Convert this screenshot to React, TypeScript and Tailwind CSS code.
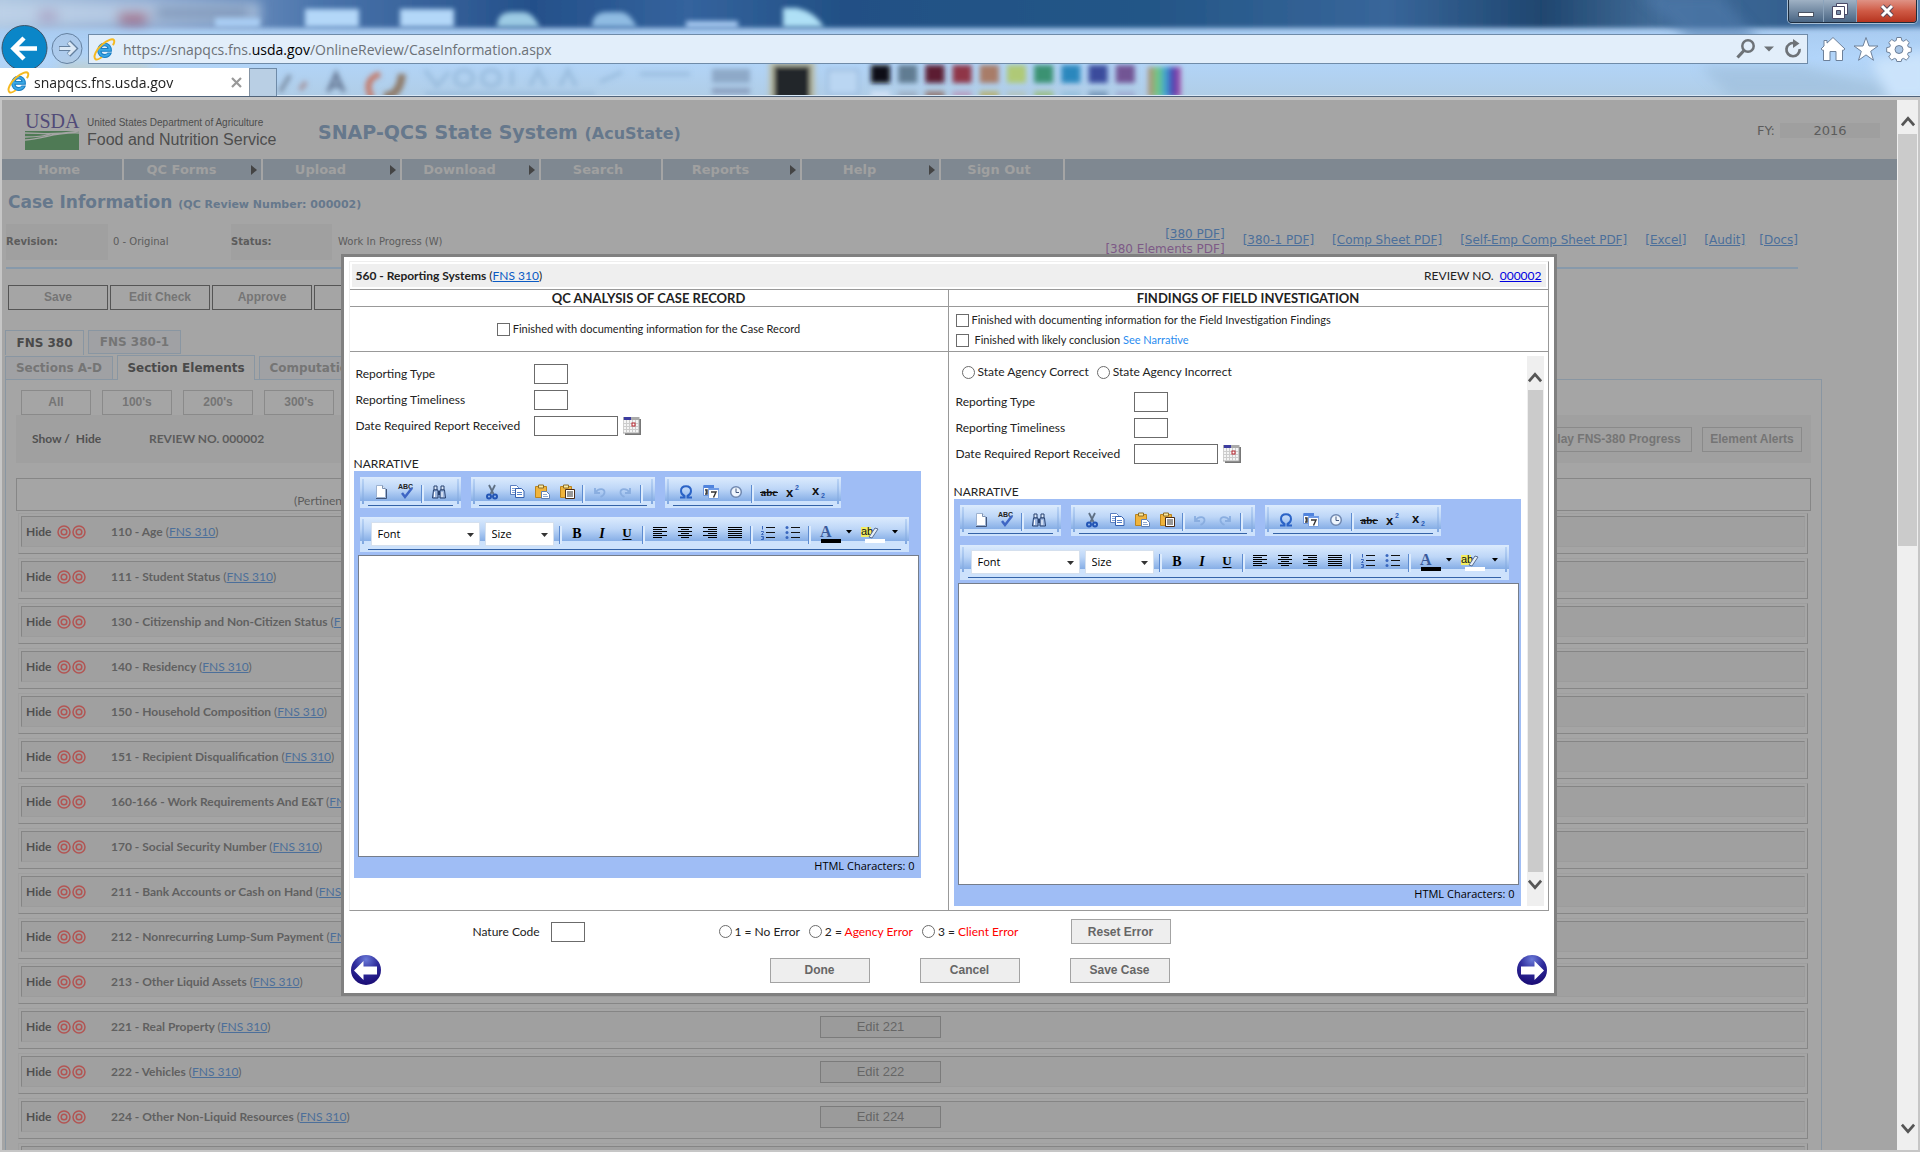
import React from "react";

const GILL = "font-['Lato','Liberation_Sans',sans-serif]";
const VERDANA = "font-['DejaVu_Sans','Liberation_Sans',sans-serif]";
const ARIAL = "font-['Liberation_Sans',Arial,sans-serif]";
const SEGOE = "font-['Open_Sans','Noto_Sans',sans-serif]";

/* ---------- browser chrome ---------- */

function IeLogo({ className }: { className: string }) {
  return (
    <svg viewBox="0 0 22 22" className={className} aria-hidden="true">
      <path d="M17.6 12.6H7.6c.2 2 1.6 3.3 3.6 3.3 1.400 0 2.400-.6 3-1.500h3.200c-1 2.700-3.300 4.200-6.200 4.200-3.900 0-6.700-2.900-6.700-6.800 0-3.900 2.800-6.800 6.600-6.800 4 0 6.700 3 6.500 7.600zM7.700 10.100h6.700c-.3-1.700-1.500-2.700-3.300-2.700-1.700 0-3 1-3.400 2.700z" fill="#3aa8e6" stroke="#1b7fc4" strokeWidth="1" />
      <path d="M2.500 20.300C-.5 18 3.500 10.500 9 6c4.800-4 9.700-6 11-4 .7 1.100.2 2.700-.6 4.200" fill="none" stroke="#f5b921" strokeWidth="1.900" strokeLinecap="round" />
      <path d="M2.500 20.300c1.200.8 3.300 0 5.300-1.500" fill="none" stroke="#f5b921" strokeWidth="1.700" strokeLinecap="round" />
    </svg>
  );
}

const SWATCHES = [
  ["#0c1116", "#cfe0f4"], ["#617b92", "#9fb2c8"], ["#5c1a30", "#95817f"], ["#8f3446", "#b6a3c4"],
  ["#a87c68", "#b5b37f"], ["#afc977", "#b3c6c4"], ["#3a9272", "#9cc08f"], ["#2a87bd", "#9ac1dd"],
  ["#3a4c9c", "#7d9dbd"], ["#725494", "#a0b0d4"],
];

function GlassBackdrop() {
  return (
    <svg className="absolute inset-0 h-full w-full" viewBox="0 0 1920 97" preserveAspectRatio="none" aria-hidden="true">
      <defs>
        <linearGradient id="top" x1="0" x2="1" y1="0" y2="0">
          <stop offset="0" stopColor="#b0c8e2" />
          <stop offset="0.080" stopColor="#8aa6cf" />
          <stop offset="0.170" stopColor="#4a74ab" />
          <stop offset="0.280" stopColor="#24508a" />
          <stop offset="0.360" stopColor="#34639d" />
          <stop offset="0.440" stopColor="#225085" />
          <stop offset="0.600" stopColor="#245687" />
          <stop offset="0.720" stopColor="#38669a" />
          <stop offset="0.800" stopColor="#1f466f" />
          <stop offset="0.860" stopColor="#426c98" />
          <stop offset="0.930" stopColor="#34608f" />
          <stop offset="1" stopColor="#5685b5" />
        </linearGradient>
        <linearGradient id="low" x1="0" x2="0" y1="0" y2="1">
          <stop offset="0" stopColor="#9fc1e6" />
          <stop offset="0.600" stopColor="#b2d5fa" />
          <stop offset="1" stopColor="#b0cde6" />
        </linearGradient>
        <linearGradient id="rainbow" x1="0" x2="1" y1="0" y2="0">
          <stop offset="0" stopColor="#b98a76" />
          <stop offset="0.300" stopColor="#6ccb84" />
          <stop offset="0.550" stopColor="#3d9ed6" />
          <stop offset="0.750" stopColor="#4a3fb0" />
          <stop offset="1" stopColor="#b057a8" />
        </linearGradient>
        <filter id="soft" x="-20%" y="-20%" width="140%" height="140%"><feGaussianBlur stdDeviation="2.500" /></filter>
        <filter id="haze" x="-20%" y="-60%" width="140%" height="220%"><feGaussianBlur stdDeviation="6" /></filter>
      </defs>
      <rect width="1920" height="97" fill="url(#low)" />
      <g filter="url(#soft)"><rect x="-10" y="-20" width="1940" height="48" fill="url(#top)" /></g>
      <g filter="url(#haze)">
        <rect x="-10" y="2" width="270" height="22" fill="#c3d5ea" opacity="0.700" />
        <rect x="38" y="10" width="20" height="12" fill="#a48fb8" opacity="0.600" />
        <rect x="118" y="12" width="30" height="12" fill="#a04c68" opacity="0.700" />
        <rect x="155" y="8" width="95" height="10" fill="#57739c" opacity="0.700" />
        <path d="M1640 -5L1720 -5L1760 40L1690 40Z" fill="#4f7cab" opacity="0.600" />
        <path d="M1700 66L1800 66L1920 97L1730 97Z" fill="#9cbcd9" opacity="0.600" />
        <path d="M1870 60L1930 50L1930 100L1890 100Z" fill="#cbe3fb" />
        <rect x="60" y="62" width="90" height="40" fill="#c6cdbb" opacity="0.600" />
      </g>
      <g filter="url(#soft)">
        <rect x="305" y="9" width="54" height="18" fill="#b3d7f8" />
        <rect x="400" y="9" width="54" height="18" fill="#b3d7f8" />
        <path d="M497 27q0-15 15-15h12q8 0 16 15z" fill="#9ccbe4" />
        <path d="M592 27q0-15 15-15h14q8 0 16 15z" fill="#8fbbe2" />
        <rect x="215" y="18" width="45" height="9" fill="#a9cdf3" />
        <rect x="686" y="21" width="52" height="7" fill="#a5c8f0" />
        <path d="M783 27V8h14q18 4 27 19z" fill="#afe0f6" />
        <path d="M280 92l10-17" stroke="#7c8ea5" strokeWidth="4" />
        <path d="M300 90l6-8" stroke="#a59aa6" strokeWidth="5" />
        <path d="M328 92l8-18 8 18M331 86h10" stroke="#6c7f9b" strokeWidth="4" fill="none" />
        <path d="M380 74q-18 6-8 24" stroke="#c47a6b" strokeWidth="6" fill="none" />
        <path d="M384 96q16 0 18-22" stroke="#8f7c6b" strokeWidth="8" fill="none" />
        <path opacity="0.600" d="M425 70l12 16 12-14M455 78a9 8 0 1 0 18 0a9 8 0 1 0-18 0M482 78a9 8 0 1 0 18 0a9 8 0 1 0-18 0M512 70v16M530 86l8-16 8 16M560 86l8-16 8 16M600 82l22-10M425 94h170M640 74h50" stroke="#8cb0d4" strokeWidth="4" fill="none" />
        <rect x="712" y="69" width="38" height="14" fill="#8ea9c8" />
        <rect x="712" y="88" width="38" height="6" fill="#8a9fbe" />
        <rect x="769" y="62" width="46" height="40" fill="#b9bda9" />
        <rect x="774" y="66" width="36" height="34" fill="#24272b" />
        <rect x="828" y="70" width="30" height="24" fill="#bad6f2" stroke="#98b8dc" strokeWidth="2" />
        {SWATCHES.map(([a, b], i) => (
          <g key={a}>
            <rect x={871 + i * 27.200} y="65" width="19" height="18" fill={a} />
            <rect x={871 + i * 27.200} y="91" width="19" height="9" fill={b} />
          </g>
        ))}
        <rect x="1148" y="67" width="33" height="30" fill="url(#rainbow)" />
      </g>
      <rect y="95" width="1920" height="1" fill="#d9e9f8" />
      <rect y="96" width="1920" height="1" fill="#50637a" />
    </svg>
  );
}

function BrowserChrome() {
  return (
    <header className={`relative h-[97px] shrink-0 overflow-hidden ${SEGOE}`}>
      <GlassBackdrop />
      <div className="absolute top-0 right-[3px] flex h-[23px] w-[129px] overflow-hidden rounded-b-[4px] border border-t-0 border-[#1d2c3d] shadow-[0_0_0_1px_#a5bdd4]">
        <button aria-label="Minimize" className="grid w-[35px] place-items-center border-r border-[#8ba3bb] bg-linear-to-b from-[#9fb1c4] to-[#4a6684]">
          <svg width="18" height="14" viewBox="0 0 18 14"><rect x="1.500" y="8.500" width="15" height="4" fill="#fff" stroke="#4a5363" /></svg>
        </button>
        <button aria-label="Restore" className="grid w-[33px] place-items-center border-r border-[#8ba3bb] bg-linear-to-b from-[#9fb1c4] to-[#4a6684]">
          <svg width="20" height="18" viewBox="0 0 20 18">
            <path d="M6.500 1.500h11v11h-11z" fill="#fff" stroke="#4a4a66" />
            <path d="M2.500 4.500h12v12h-12z" fill="#fff" stroke="#4a4a66" />
            <path d="M6.500 8.500h4v4h-4z" fill="#7a8fa8" stroke="#4a4a66" />
          </svg>
        </button>
        <button aria-label="Close" className="grid flex-1 place-items-center bg-linear-to-b from-[#df9285] via-[#cf5a45] to-[#b6331e]">
          <svg width="20" height="16" viewBox="0 0 20 16">
            <path d="M5 3l10 10M15 3L5 13" stroke="#5b4a5a" strokeWidth="5" />
            <path d="M5 3l10 10M15 3L5 13" stroke="#fff" strokeWidth="3" />
          </svg>
        </button>
      </div>
      <div className="relative flex h-[68px] items-start pt-[34px]">
        <div className="relative h-[30px] w-[88px] shrink-0">
          <svg className="absolute -top-[10px] left-0" width="88" height="44" viewBox="0 0 88 44" role="img" aria-label="Back and forward">
            <circle cx="24.500" cy="24" r="22.500" fill="#0a86c8" stroke="#3c5468" />
            <path d="M37 24.500H15M24 14L13.500 24.500 24 35" fill="none" stroke="#fff" strokeWidth="4.500" />
            <circle cx="67" cy="24.500" r="15" fill="#a9c4e2" fillOpacity="0.500" stroke="#64809f" />
            <path d="M59 24.500h15M68.500 18l6.500 6.500-6.500 6.500" fill="none" stroke="#64809f" strokeWidth="5" />
            <path d="M59.500 24.500h14M68.500 18.500l6 6-6 6" fill="none" stroke="#dbe8f5" strokeWidth="3" />
          </svg>
        </div>
        <div className="flex h-[30px] flex-1 items-center border border-[#6f8ba8] bg-[#e2eefa] pl-[4px]">
          <IeLogo className="h-[23px] w-[23px]" />
          <span className="ml-[7px] flex-1 pt-[2px] text-[14px] leading-5 text-[#6c7177]">
            https://snapqcs.fns.<b className="font-normal text-black">usda.gov</b>/OnlineReview/CaseInformation.aspx
          </span>
          <button aria-label="Search">
            <svg width="20" height="20" viewBox="0 0 20 20" fill="none" stroke="#6d7277"><circle cx="12" cy="7" r="5.700" strokeWidth="2.500" /><path d="M8 11.500L1.500 18.500" strokeWidth="3.200" /></svg>
          </button>
          <button aria-label="Search options" className="mx-[8px]">
            <svg width="10" height="6" viewBox="0 0 10 6"><path d="M0 .5h10L5 5.500z" fill="#6d7277" /></svg>
          </button>
          <button aria-label="Refresh" className="mr-[5px] ml-[2px]">
            <svg width="18" height="20" viewBox="0 0 18 20"><path d="M10.500 4.200A6.600 6.600 0 1 0 15.600 10" fill="none" stroke="#6d7277" strokeWidth="2.700" /><path d="M9 0l6.500 4.500L9 9z" fill="#6d7277" /></svg>
          </button>
        </div>
        <div className="flex h-[30px] items-center gap-[7px] pr-[8px] pl-[12px]">
          <button aria-label="Home">
            <svg width="26" height="26" viewBox="0 0 26 26"><path d="M13 1.500L25 13l-2 1.500-.5-.3V24.500h-6.500v-9h-6v9H3.500V14.200l-.5.3L1 13l3-3V4.500h3v2.600z" fill="#fff" stroke="#6d8099" /></svg>
          </button>
          <button aria-label="Favorites">
            <svg width="26" height="26" viewBox="0 0 26 26"><path d="M13 1.500l3 8.500h9l-7.300 5.300 2.800 9L13 18.900l-7.500 5.400 2.800-9L1 10h9z" fill="#fff" stroke="#6d8099" /></svg>
          </button>
          <button aria-label="Tools">
            <svg width="26" height="26" viewBox="0 0 26 26">
              <path d="M10.800 1.500h4.400l.6 3 1.800.8 2.600-1.800 3.100 3.100-1.700 2.600.7 1.800 3 .6v4.400l-3 .6-.8 1.800 1.800 2.600-3.100 3.100-2.600-1.700-1.800.7-.6 2.400h-4.400l-.6-2.400-1.800-.7-2.600 1.700L2.700 21l1.800-2.600-.8-1.800-3-.6v-4.400l3-.6.7-1.800-1.700-2.600 3.100-3.100 2.600 1.800 1.800-.8z" fill="#fff" stroke="#6d8099" />
              <circle cx="13" cy="13.500" r="4" fill="#a9c6e6" stroke="#6d8099" />
            </svg>
          </button>
        </div>
      </div>
      <div className="relative flex h-[28px]">
        <div className="flex w-[250px] items-center border-r border-[#8493a3] bg-white pl-[7px]">
          <IeLogo className="h-[23px] w-[23px]" />
          <span className="ml-[4px] flex-1 pt-px text-[14px] leading-5 text-[#222]">snapqcs.fns.usda.gov</span>
          <button aria-label="Close tab" className="mr-[7px]">
            <svg width="11" height="11" viewBox="0 0 11 11"><path d="M1 1l9 9M10 1l-9 9" stroke="#999" strokeWidth="2.200" /></svg>
          </button>
        </div>
        <button aria-label="New tab" className="w-[27px] border-t border-r border-[#6f8ba8] bg-[#b9cfe4]" />
      </div>
    </header>
  );
}

/* ---------- page behind the dialog ---------- */

function UsdaLogo() {
  return (
    <div className={`flex gap-[7px] ${ARIAL}`}>
      <div className="flex w-[55px] flex-col">
        <span className="font-['Liberation_Serif',serif] text-[20px] leading-[19px] text-[#514b78]">USDA</span>
        <svg width="54" height="19" viewBox="0 0 54 19" aria-hidden="true">
          <rect width="54" height="19" fill="#4f7a55" />
          <path d="M0 2c18 0 26 3 54-2M0 9c20-1 28-8 54-7M0 6c14 0 20-1 26-3" stroke="#a5a5a5" strokeWidth="1.300" fill="none" />
        </svg>
      </div>
      <div className="flex flex-col text-[#4d4d4d]">
        <span className="pt-[4px] text-[10px] leading-[14px]">United States Department of Agriculture</span>
        <span className="text-[16px] leading-[19px]">Food and Nutrition Service</span>
      </div>
    </div>
  );
}

const NAV: [string, boolean, string][] = [
  ["Home", false, "w-[122px]"], ["QC Forms", true, "w-[139px]"], ["Upload", true, "w-[139px]"],
  ["Download", true, "w-[139px]"], ["Search", false, "w-[122px]"], ["Reports", true, "w-[139px]"],
  ["Help", true, "w-[139px]"], ["Sign Out", false, "w-[124px]"],
];

const LINK = "text-[#4c6f9a] underline";

function FnsLink() {
  return (
    <span className="font-normal">
      (<a href="#fns310" className={LINK}>FNS 310</a>)
    </span>
  );
}

function PageButton({ children, className = "" }: { children: React.ReactNode; className?: string }) {
  return (
    <button className={`h-[25px] border pb-px text-center text-[12px] leading-4 font-bold text-[#757575] ${ARIAL} ${className}`}>{children}</button>
  );
}

function Target() {
  return (
    <svg width="14" height="14" viewBox="0 0 14 14" fill="none" stroke="#b25553" aria-hidden="true">
      <circle cx="7" cy="7" r="6" strokeWidth="1.500" />
      <circle cx="7" cy="7" r="2.800" strokeWidth="1.500" />
    </svg>
  );
}

const ELEMENTS: [string, string?][] = [
  ["110 - Age"], ["111 - Student Status"], ["130 - Citizenship and Non-Citizen Status"], ["140 - Residency"],
  ["150 - Household Composition"], ["151 - Recipient Disqualification"], ["160-166 - Work Requirements And E&T"],
  ["170 - Social Security Number"], ["211 - Bank Accounts or Cash on Hand"], ["212 - Nonrecurring Lump-Sum Payment"],
  ["213 - Other Liquid Assets"], ["221 - Real Property", "Edit 221"], ["222 - Vehicles", "Edit 222"],
  ["224 - Other Non-Liquid Resources", "Edit 224"],
];

function ElementRow({ children }: { children?: React.ReactNode }) {
  return (
    <div className="h-[41px] shrink-0 border border-t-[#9f9f9f] border-r-[#868686] border-b-[#868686] border-l-[#9f9f9f] px-[2px] pt-[2px]">
      <div className="flex h-[31px] items-center border border-t-[#858585] border-r-[#9c9c9c] border-b-[#9c9c9c] border-l-[#858585] bg-[#a0a0a0] pl-[4px] font-bold">
        {children}
      </div>
    </div>
  );
}

function CasePage() {
  return (
    <div className={`h-full overflow-hidden bg-[#a5a5a5] text-[#5c5c5c] ${VERDANA}`}>
      <div className="flex h-[59px] items-start pt-[12px] pl-[23px]">
        <div className="w-[293px]"><UsdaLogo /></div>
        <h1 className="pt-[8px] text-[19px] leading-6 font-bold text-[#66788c]">
          SNAP-QCS State System <span className="text-[16px]">(AcuState)</span>
        </h1>
        <div className="mt-[11px] mr-[17px] ml-auto flex items-center gap-[5px] text-[13px] leading-[15px]">
          FY:<span className="w-[100px] bg-[#9f9f9f] text-center">2016</span>
        </div>
      </div>
      <nav className="flex h-[21px] bg-[#7f8891] text-[13px] leading-[21px] font-bold text-[#a0a0a0]">
        {NAV.map(([label, sub, w]) => (
          <a key={label} href={`#${label}`} className={`flex items-center border-r-2 border-[#a5a5a5] ${w}`}>
            <span className="flex-1 text-center">{label}</span>
            {sub ? (
              <svg className="mr-[4px] ml-[12px]" width="6" height="10" viewBox="0 0 6 10"><path d="M0 0l6 5-6 5z" fill="#444" /></svg>
            ) : (
              <span className="w-[6px]" />
            )}
          </a>
        ))}
      </nav>
      <h2 className="h-[44px] pt-[10px] pl-[6px] text-[17px] leading-6 font-bold text-[#66788c]">
        Case Information <span className="text-[11px]">(QC Review Number: 000002)</span>
      </h2>
      <div className="mr-[99px] ml-[4px] flex h-[45px] items-start border-b-2 border-[#8799aa] text-[10px] leading-[36px]">
        <b className="w-[102px] bg-[#a0a0a0]">Revision:</b>
        <span className="w-[123px] pl-[5px]">0 - Original</span>
        <b className="w-[101px] bg-[#a0a0a0]">Status:</b>
        <span className="pl-[6px]">Work In Progress (W)</span>
        <div className="ml-auto flex items-center gap-[18px] text-[12px] leading-[15px]">
          <span className="flex flex-col items-end pt-[3px]">
            <a href="#380" className={LINK}>[380 PDF]</a>
            <a href="#380e" className="text-[#7d5a87] underline">[380 Elements PDF]</a>
          </span>
          {["[380-1 PDF]", "[Comp Sheet PDF]", "[Self-Emp Comp Sheet PDF]", "[Excel]", "[Audit]"].map((t) => (
            <a key={t} href="#doc" className={LINK}>{t}</a>
          ))}
          <a href="#docs" className={`-ml-[4px] ${LINK}`}>[Docs]</a>
        </div>
      </div>
      <div className="flex gap-[2px] pt-[16px] pl-[6px]">
        {["Save", "Edit Check", "Approve", "Reject"].map((t) => (
          <PageButton key={t} className="w-[100px] border-[#555]">{t}</PageButton>
        ))}
      </div>
      <div className="flex items-start gap-[4px] pt-[20px] pl-[3px] text-[12px] font-bold">
        <button className="h-[25px] w-[79px] border border-b-0 border-[#8996a2] text-[#4a4a4a]">FNS 380</button>
        <button className="h-[24px] w-[93px] border border-[#8996a2] bg-[#a0a1a4] text-[#757575]">FNS 380-1</button>
      </div>
      <div className="mr-[75px] ml-[3px] flex items-end text-[12px] leading-[22px] font-bold">
        <button className="h-[24px] w-[108px] border border-[#8996a2] bg-[#a0a1a4] text-[#757575]">Sections A-D</button>
        <span className="w-[4px] self-stretch border-b border-[#8996a2]" />
        <button className="h-[25px] w-[138px] border border-b-0 border-[#8996a2] text-[#4a4a4a]">Section Elements</button>
        <span className="w-[4px] self-stretch border-b border-[#8996a2]" />
        <button className="h-[24px] w-[108px] border border-[#8996a2] bg-[#a0a1a4] text-[#757575]">Computation</button>
        <span className="flex-1 self-stretch border-b border-[#8996a2]" />
      </div>
      <div className={`mr-[75px] ml-[3px] border-x border-[#8996a2] pt-[10px] pr-[10px] pl-[10px] ${GILL} text-[12px] leading-4`}>
        <div className="flex gap-[11px] pl-[5px]">
          {["All", "100's", "200's", "300's"].map((t) => (
            <PageButton key={t} className="w-[70px] border-[#8a8a8a]">{t}</PageButton>
          ))}
        </div>
        <div className="flex h-[48px] items-center bg-[#a0a0a0] pr-[9px] pl-[16px] font-bold">
          <span className="w-[117px] text-[#505050]">Show / &nbsp;Hide</span>
          <span>REVIEW NO. 000002</span>
          <div className="ml-auto flex gap-[10px]">
            <PageButton className="w-[172px] border-[#8a8a8a]">Display FNS-380 Progress</PageButton>
            <PageButton className="w-[100px] border-[#8a8a8a]">Element Alerts</PageButton>
          </div>
        </div>
        <div className="mt-[15px] h-[33px] border border-[#868686] pt-[14px] pl-[277px]">(Pertinent</div>
        <div className="mr-[3px] ml-[2px] flex flex-col gap-[4px] pt-[2px]">
          {ELEMENTS.map(([name, edit]) => (
            <ElementRow key={name}>
              <span className="w-[31px] text-[#505050]">Hide</span>
              <span className="flex w-[54px] gap-px"><Target /><Target /></span>
              <span className="w-[709px] text-[#606060]">{name} <FnsLink /></span>
              {edit && <button className={`h-[22px] w-[121px] border border-[#7b7b7b] bg-[#9b9b9b] text-[13px] leading-[19px] font-normal text-[#666] ${ARIAL}`}>{edit}</button>}
            </ElementRow>
          ))}
          <ElementRow />
        </div>
      </div>
    </div>
  );
}

function ScrollRail({ className, thumb }: { className: string; thumb: string }) {
  return (
    <div className={`flex flex-col items-stretch bg-[#efefef] ${className}`} role="presentation">
      <span className="grid h-[34px] shrink-0 place-items-center pt-[8px]">
        <svg width="14" height="12" viewBox="0 0 16 12"><path d="M1 11L8 3l7 8" fill="none" stroke="#555" strokeWidth="3.200" /></svg>
      </span>
      <span className="flex flex-1 flex-col px-px"><span className={`bg-[#cbcbcb] ${thumb}`} /></span>
      <span className="grid h-[34px] shrink-0 place-items-center pb-[8px]">
        <svg width="14" height="12" viewBox="0 0 16 12"><path d="M1 1l7 8 7-8" fill="none" stroke="#555" strokeWidth="3.200" /></svg>
      </span>
    </div>
  );
}

/* ---------- rich text editor ---------- */

const I: Record<string, React.ReactNode> = {
  New: <><path d="M3.500 1.500h6l3 3v9h-9z" fill="#fff" stroke="#9db2d0" /><path d="M9.500 1.500v3h3" fill="#dfe9f6" stroke="#7d93b5" /><path d="M3 14.500h10.500V5" fill="none" stroke="#41557a" /></>,
  Spelling: <><text x="0" y="5" fontSize="7" fontWeight="700" fontFamily="Liberation Sans" fill="#222">ABC</text><path d="M4 9l3 4 7-9" fill="none" stroke="#3f66c4" strokeWidth="2.500" /></>,
  Find: <><path d="M3 2h3v4H3zM10 2h3v4h-3z" fill="#dce8f8" stroke="#26406f" /><path d="M2.500 6h4.500v8H1.500zM9 6h4.500l1 8H9z" fill="#9fb8e0" stroke="#26406f" /><path d="M7 7h2v4H7z" fill="#26406f" /><path d="M3.500 8v5M11 8v5" stroke="#fff" /></>,
  Cut: <><path d="M5 1l4.500 9M11 1L6.500 10" stroke="#5f7084" strokeWidth="1.800" fill="none" /><circle cx="5" cy="12.500" r="2" fill="none" stroke="#2355b5" strokeWidth="2" /><circle cx="11" cy="12.500" r="2" fill="none" stroke="#2355b5" strokeWidth="2" /></>,
  Copy: <><path d="M1.500 1.500h6l2 2v7h-8z" fill="#fff" stroke="#5b7fc0" /><path d="M3 4.500h4M3 6.500h4M3 8.500h3" stroke="#7e9fd6" /><path d="M6.500 4.500h6l2.500 2.500v6.500h-8.500z" fill="#fff" stroke="#3560ae" /><path d="M8 8.500h5M8 10.500h5" stroke="#5580c8" /></>,
  Paste: <><path d="M1.500 2.500h11v11h-11z" fill="#f0b43c" stroke="#b98420" /><path d="M4.500 1h5v3h-5z" fill="#fbe9a0" stroke="#8a6d2a" /><path d="M7.500 7.500h5l3 3v4h-8z" fill="#fff" stroke="#5e7fb4" /><path d="M9 10.500h4M9 12.500h5" stroke="#8fa9d1" /></>,
  "Paste text": <><path d="M1.500 2.500h11v11h-11z" fill="#f0b43c" stroke="#b98420" /><path d="M4.500 1h5v3h-5z" fill="#fbe9a0" stroke="#8a6d2a" /><path d="M6.500 5.500h9v9h-9z" fill="#fff" stroke="#4a2d18" /><path d="M8 8h6M8 10h6M8 12h6" stroke="#333" /></>,
  Undo: <path d="M3 4v5h5M3.500 8.500C6 4 13 4 12.500 8.500c0 2-2 3.500-4 4.500" fill="none" stroke="#8aaee0" strokeWidth="1.800" />,
  Redo: <path d="M13 4v5H8M12.500 8.500C10 4 3 4 3.500 8.500c0 2 2 3.500 4 4.500" fill="none" stroke="#8aaee0" strokeWidth="1.800" />,
  Symbol: <path d="M2 13.500h4.500v-1.500C4.500 11 3 9.500 3 7c0-3 2-4.700 5-4.700S13 4 13 7c0 2.500-1.500 4-3.500 5v1.500H14" fill="none" stroke="#2b63c6" strokeWidth="2" />,
  Date: <><path d="M.5 1.500h10v10H.5z" fill="#fff" stroke="#6a94dc" /><path d="M1 1h10v3H1z" fill="#4f83dd" /><path d="M5.500 4.500h10v10h-10z" fill="#fff" stroke="#7ba3e2" /><path d="M6 4h10v2H6z" fill="#6d9ae6" /><path d="M8 8h5l-2.500 5.500M2 6h2v2H2.500M4 8v2H2" fill="none" stroke="#333" strokeWidth="1.400" /></>,
  Time: <><circle cx="8" cy="8" r="5.300" fill="#eef5fd" stroke="#7088b0" strokeWidth="1.500" /><path d="M8 4.500V8.500h3" fill="none" stroke="#44597f" /></>,
  Strikethrough: <><text x="8" y="12" textAnchor="middle" fontSize="11" fontWeight="700" fontFamily="Liberation Serif" fill="#111">abc</text><path d="M-1 8.500h18" stroke="#111" /></>,
  Superscript: <><text x="0" y="13" fontSize="13" fontWeight="700" fontFamily="Liberation Sans" fill="#111">x</text><text x="9" y="6" fontSize="7" fontWeight="700" fontFamily="Liberation Sans" fill="#2b5bb5">2</text></>,
  Subscript: <><text x="1" y="11" fontSize="13" fontWeight="700" fontFamily="Liberation Sans" fill="#111">x</text><text x="10" y="14" fontSize="7" fontWeight="700" fontFamily="Liberation Sans" fill="#2b5bb5">2</text></>,
  Bold: <text x="8" y="13" textAnchor="middle" fontSize="14" fontWeight="700" fontFamily="Liberation Serif">B</text>,
  Italic: <text x="8" y="13" textAnchor="middle" fontSize="14" fontWeight="700" fontStyle="italic" fontFamily="Liberation Serif">I</text>,
  Underline: <><text x="8" y="12" textAnchor="middle" fontSize="13" fontWeight="700" fontFamily="Liberation Serif">U</text><path d="M3.500 14.500h9" stroke="#000" /></>,
  "Align left": <path d="M1 2.500h14M1 4.500h9M1 6.500h14M1 8.500h9M1 10.500h14M1 12.500h9" stroke="#000" />,
  Center: <path d="M1 2.500h14M4 4.500h8M1 6.500h14M4 8.500h8M1 10.500h14M4 12.500h8" stroke="#000" />,
  "Align right": <path d="M1 2.500h14M6 4.500h9M1 6.500h14M6 8.500h9M1 10.500h14M6 12.500h9" stroke="#000" />,
  Justify: <path d="M1 2.500h14M1 4.500h14M1 6.500h14M1 8.500h14M1 10.500h14M1 12.500h14" stroke="#000" />,
  Numbering: <><path d="M2.500 1v3.500M1 6.500h2.500v1L1.500 9.500h2M1 11.500h2.500v3H1M2 13h1.500" fill="none" stroke="#3a67bd" /><path d="M6 2.500h9M6 7.500h9M6 12.500h9" stroke="#111" /></>,
  Bullets: <><circle cx="2" cy="2.500" r="1.500" fill="#3a67bd" /><circle cx="2" cy="7.500" r="1.500" fill="#3a67bd" /><circle cx="2" cy="12.500" r="1.500" fill="#3a67bd" /><path d="M6 2.500h9M6 7.500h9M6 12.500h9" stroke="#111" /></>,
};

function Tool({ name }: { name: string }) {
  return (
    <button type="button" aria-label={name} className="grid h-[24px] w-[25px] shrink-0 place-items-center pt-[5px]">
      <svg width="16" height="16" viewBox="0 0 16 16" overflow="visible">{I[name]}</svg>
    </button>
  );
}

function Sep() {
  return (
    <span className="flex h-[26px] w-[8px] shrink-0 justify-center pt-[8px]">
      <span className="w-px bg-[#5c8bd0]" /><span className="w-[2px] bg-[#dcebfd]" />
    </span>
  );
}

function Handle() {
  return <span className="mt-[2px] h-[25px] w-[2px] shrink-0 bg-linear-to-b from-[#b9d3f5] to-[#7fa7e0]" />;
}

function ToolGroup({ tall, children }: { tall?: boolean; children: React.ReactNode }) {
  return (
    <div className={`flex flex-col bg-[#cde2fc] ${tall ? "h-[35px]" : "h-[31px]"}`}>
      <div className="flex h-[24px] bg-linear-to-b from-[#dcebfd] via-[#bdd6f7] to-[#86aee6] px-[2px]">
        <Handle />
        <div className={`flex ${tall ? "pt-px pl-[7px]" : "px-[5px]"}`}>{children}</div>
        <span className="flex-1" />
        <Handle />
      </div>
      <span className={`mx-[8px] h-px bg-[#3463a8] ${tall ? "mt-[8px]" : "mt-[4px]"}`} />
    </div>
  );
}

function PickColor({ kind }: { kind: "text" | "highlight" }) {
  return (
    <button type="button" aria-label={kind === "text" ? "Text color" : "Highlight color"} className="flex h-[26px] items-center pt-[2px]">
      <svg width="28" height="26" viewBox="0 0 28 26">
        {kind === "text" ? (
          <><text x="6" y="18" fontSize="16" fontWeight="700" fontFamily="Liberation Serif" fill="#3a5a9a">A</text><rect x="7" y="20" width="20" height="4" fill="#000" /></>
        ) : (
          <><rect x="1" y="8" width="10" height="10" fill="#f2ee62" /><text x="1" y="16" fontSize="11" fontFamily="Liberation Sans" fill="#111">ab</text><path d="M9 18l6-9 3 1-6 9z" fill="#e6eef8" stroke="#5a6f90" /><rect x="5" y="20" width="20" height="4" fill="#fff" /></>
        )}
      </svg>
      <svg className="mx-[4px]" width="6" height="4" viewBox="0 0 6 4"><path d="M0 0h6L3 3.500z" fill="#000" /></svg>
    </button>
  );
}

function EditorSelect({ label, w }: { label: string; w: string }) {
  return (
    <span className={`relative mt-[4px] block h-[24px] shrink-0 ${w}`}>
      <select aria-label={label} className="h-full w-full appearance-none border border-[#d5e0ee] bg-white pl-[6px] text-[11px] leading-4 text-black">
        <option>{label}</option>
      </select>
      <svg className="pointer-events-none absolute top-[11px] right-[6px]" width="7" height="4" viewBox="0 0 7 4"><path d="M0 0h7L3.500 4z" fill="#333" /></svg>
    </span>
  );
}

function Editor({ id }: { id: string }) {
  return (
    <div className={`w-[567px] max-w-full bg-[#9fbdf5] pt-[6px] ${SEGOE}`}>
      <div className="flex gap-[10px] px-[6px]">
        <ToolGroup><Tool name="New" /><Tool name="Spelling" /><Sep /><Tool name="Find" /></ToolGroup>
        <ToolGroup><Tool name="Cut" /><Tool name="Copy" /><Tool name="Paste" /><Tool name="Paste text" /><Sep /><Tool name="Undo" /><Tool name="Redo" /><Sep /></ToolGroup>
        <ToolGroup><Tool name="Symbol" /><Tool name="Date" /><Tool name="Time" /><Sep /><Tool name="Strikethrough" /><Tool name="Superscript" /><Tool name="Subscript" /></ToolGroup>
      </div>
      <div className="mt-[9px] mr-[12px] ml-[6px]">
        <ToolGroup tall>
          <EditorSelect label="Font" w="w-[109px]" />
          <span className="w-[5px]" />
          <EditorSelect label="Size" w="w-[69px]" />
          <span className="w-[3px]" />
          <Sep /><Tool name="Bold" /><Tool name="Italic" /><Tool name="Underline" />
          <Sep /><Tool name="Align left" /><Tool name="Center" /><Tool name="Align right" /><Tool name="Justify" />
          <Sep /><Tool name="Numbering" /><Tool name="Bullets" />
          <Sep /><PickColor kind="text" /><span className="w-[4px]" /><PickColor kind="highlight" />
        </ToolGroup>
      </div>
      <textarea aria-labelledby={id} className="mx-[4px] mt-[3px] block h-[302px] w-[calc(100%-6px)] resize-none border border-[#757d8a] bg-white" />
      <div className="h-[21px] pr-[6px] text-right text-[11px] leading-[18px] text-black">HTML Characters: 0</div>
    </div>
  );
}

/* ---------- dialog ---------- */

const BOX = "border border-[#6b6b6b] bg-white";

function CalendarIcon() {
  return (
    <svg width="18" height="18" viewBox="0 0 18 18">
      <path d="M2 2h16v16H2z" fill="#777" />
      <rect width="16" height="16" fill="#f4f4f4" stroke="#aaa" />
      <path d="M0 0h16v3H0z" fill="#aaa" /><path d="M1 0h7v3H1z" fill="#3c3ca0" />
      <path d="M3.500 3v13M6.500 3v13M9.500 3v13M12.500 3v13M0 6.500h16M0 9.500h16M0 12.500h16" stroke="#ccc" />
      <rect x="9" y="6" width="3" height="3" fill="#fff" stroke="#b3202a" />
    </svg>
  );
}

function Fields({ side }: { side: string }) {
  const rows: [string, string, string][] = [
    ["type", "Reporting Type", "w-[34px]"],
    ["time", "Reporting Timeliness", "w-[34px]"],
    ["date", "Date Required Report Received", "w-[84px]"],
  ];
  return (
    <div className="flex flex-col gap-[6px] pl-[2px]">
      {rows.map(([key, label, w]) => (
        <div key={key} className="flex h-[20px] items-center">
          <label htmlFor={`${side}-${key}`} className="w-[178px]">{label}</label>
          <input id={`${side}-${key}`} className={`h-[20px] ${BOX} ${w}`} />
          {key === "date" && <button aria-label="Pick a date" className="ml-[5px]"><CalendarIcon /></button>}
        </div>
      ))}
    </div>
  );
}

function Check({ id, children, gap = "gap-[3px]" }: { id: string; children: React.ReactNode; gap?: string }) {
  return (
    <label htmlFor={id} className={`flex items-center text-[11px] ${gap}`}>
      <input id={id} type="checkbox" className={`h-[13px] w-[13px] appearance-none ${BOX}`} />
      <span>{children}</span>
    </label>
  );
}

function Radio({ id, name, children }: { id: string; name: string; children: React.ReactNode }) {
  return (
    <label htmlFor={id} className="flex items-center gap-[3px]">
      <input id={id} name={name} type="radio" className={`h-[13px] w-[13px] appearance-none rounded-full ${BOX}`} />
      <span>{children}</span>
    </label>
  );
}

function ArrowOrb({ flip }: { flip?: boolean }) {
  const id = flip ? "orb-next" : "orb-prev";
  return (
    <button aria-label={flip ? "Next element" : "Previous element"}>
      <svg width="30" height="30" viewBox="0 0 30 30">
        <defs>
          <radialGradient id={id} cx="0.500" cy="0.150" r="0.800">
            <stop offset="0" stopColor="#6a7ad8" /><stop offset="0.500" stopColor="#2f2c9c" /><stop offset="1" stopColor="#1c0f78" />
          </radialGradient>
        </defs>
        <circle cx="15" cy="15" r="15" fill={`url(#${id})`} />
        <path d={flip ? "M27 15.500L17.500 6v5.500H4v8h13.500V25z" : "M3 15.500L12.500 6v5.500H26v8H12.500V25z"} fill="#fff" />
      </svg>
    </button>
  );
}

function DialogButton({ children }: { children: React.ReactNode }) {
  return <button className={`h-[25px] w-[100px] border border-[#a3a3a3] bg-[#eeeeee] text-[12px] leading-4 font-bold text-[#666] ${ARIAL}`}>{children}</button>;
}

function ReviewDialog() {
  return (
    <section role="dialog" aria-label="560 - Reporting Systems" className={`w-full max-w-[1216px] border-[3px] border-[#808080] bg-white px-[5px] pt-[4px] pb-[6px] text-[12px] leading-4 text-[#222] ${GILL}`}>
      <div className="border border-t-[#eee] border-r-[#999] border-b-[#999] border-l-[#eee]">
        <div className="m-[2px] flex h-[23px] items-center justify-between bg-[#efefef] px-[4px]">
          <span><b>560 - Reporting Systems</b> (<a href="#fns310" className="text-[#0b5bc4] underline">FNS 310</a>)</span>
          <span>REVIEW NO. &nbsp;<a href="#review" className="text-[#0000e0] underline">000002</a></span>
        </div>
        <div className="grid grid-cols-2 border-y border-[#999] text-center text-[13px] leading-4 font-bold">
          <h3 className="border-r border-[#999]">QC ANALYSIS OF CASE RECORD</h3>
          <h3>FINDINGS OF FIELD INVESTIGATION</h3>
        </div>
        <div className="grid h-[45px] grid-cols-2 border-b border-[#999]">
          <div className="flex items-center justify-center border-r border-[#999]">
            <Check id="case-done">Finished with documenting information for the Case Record</Check>
          </div>
          <div className="flex flex-col gap-[4px] pt-[5px] pl-[7px]">
            <Check id="field-done">Finished with documenting information for the Field Investigation Findings</Check>
            <Check id="likely" gap="gap-[6px]">Finished with likely conclusion <a href="#narrative" className="text-[#2a8cf0]">See Narrative</a></Check>
          </div>
        </div>
        <div className="grid grid-cols-2">
          <div className="border-r border-[#999] pt-[12px] pl-[4px]">
            <Fields side="case" />
            <h4 id="case-narrative" className="mt-[20px] leading-[15px] uppercase">Narrative</h4>
            <Editor id="case-narrative" />
          </div>
          <div className="flex justify-between pr-[4px] pb-[4px] pl-[5px]">
            <div>
              <div className="flex h-[40px] items-center gap-[8px] pl-[8px]">
                <Radio id="correct" name="agency">State Agency Correct</Radio>
                <Radio id="incorrect" name="agency">State Agency Incorrect</Radio>
              </div>
              <Fields side="field" />
              <h4 id="field-narrative" className="mt-[20px] leading-[15px] uppercase">Narrative</h4>
              <Editor id="field-narrative" />
            </div>
            <ScrollRail className="mt-[4px] w-[17px]" thumb="flex-1" />
          </div>
        </div>
      </div>
      <div className="mt-[8px] flex h-[25px] items-center pl-[124px]">
        <label htmlFor="nature" className="w-[78px]">Nature Code</label>
        <input id="nature" className={`h-[20px] w-[34px] ${BOX}`} />
        <div className="ml-[134px] flex w-[352px] gap-[9px]">
          <Radio id="none" name="error">1 = No Error</Radio>
          <Radio id="agency" name="error">2 = <span className="text-[#ff0000]">Agency Error</span></Radio>
          <Radio id="client" name="error">3 = <span className="text-[#ff0000]">Client Error</span></Radio>
        </div>
        <DialogButton>Reset Error</DialogButton>
      </div>
      <div className="mt-[11px] mb-[2px] flex items-center justify-between px-[2px]">
        <ArrowOrb />
        <div className="flex gap-[50px] pl-[42px]">
          <DialogButton>Done</DialogButton>
          <DialogButton>Cancel</DialogButton>
          <DialogButton>Save Case</DialogButton>
        </div>
        <ArrowOrb flip />
      </div>
    </section>
  );
}

export default function App() {
  return (
    <div className="flex h-screen flex-col overflow-hidden bg-[#b9b9b9]">
      <BrowserChrome />
      <div className="flex min-h-0 flex-1 border-t-[3px] border-r-2 border-b-2 border-l-2 border-[#c6c6c6]">
        <main className="relative min-w-0 flex-1">
          <CasePage />
          <div className="absolute inset-0 flex items-start justify-center overflow-hidden pt-[154px] pr-[2px]">
            <ReviewDialog />
          </div>
        </main>
        <ScrollRail className="w-[21px]" thumb="h-[42%]" />
      </div>
    </div>
  );
}
